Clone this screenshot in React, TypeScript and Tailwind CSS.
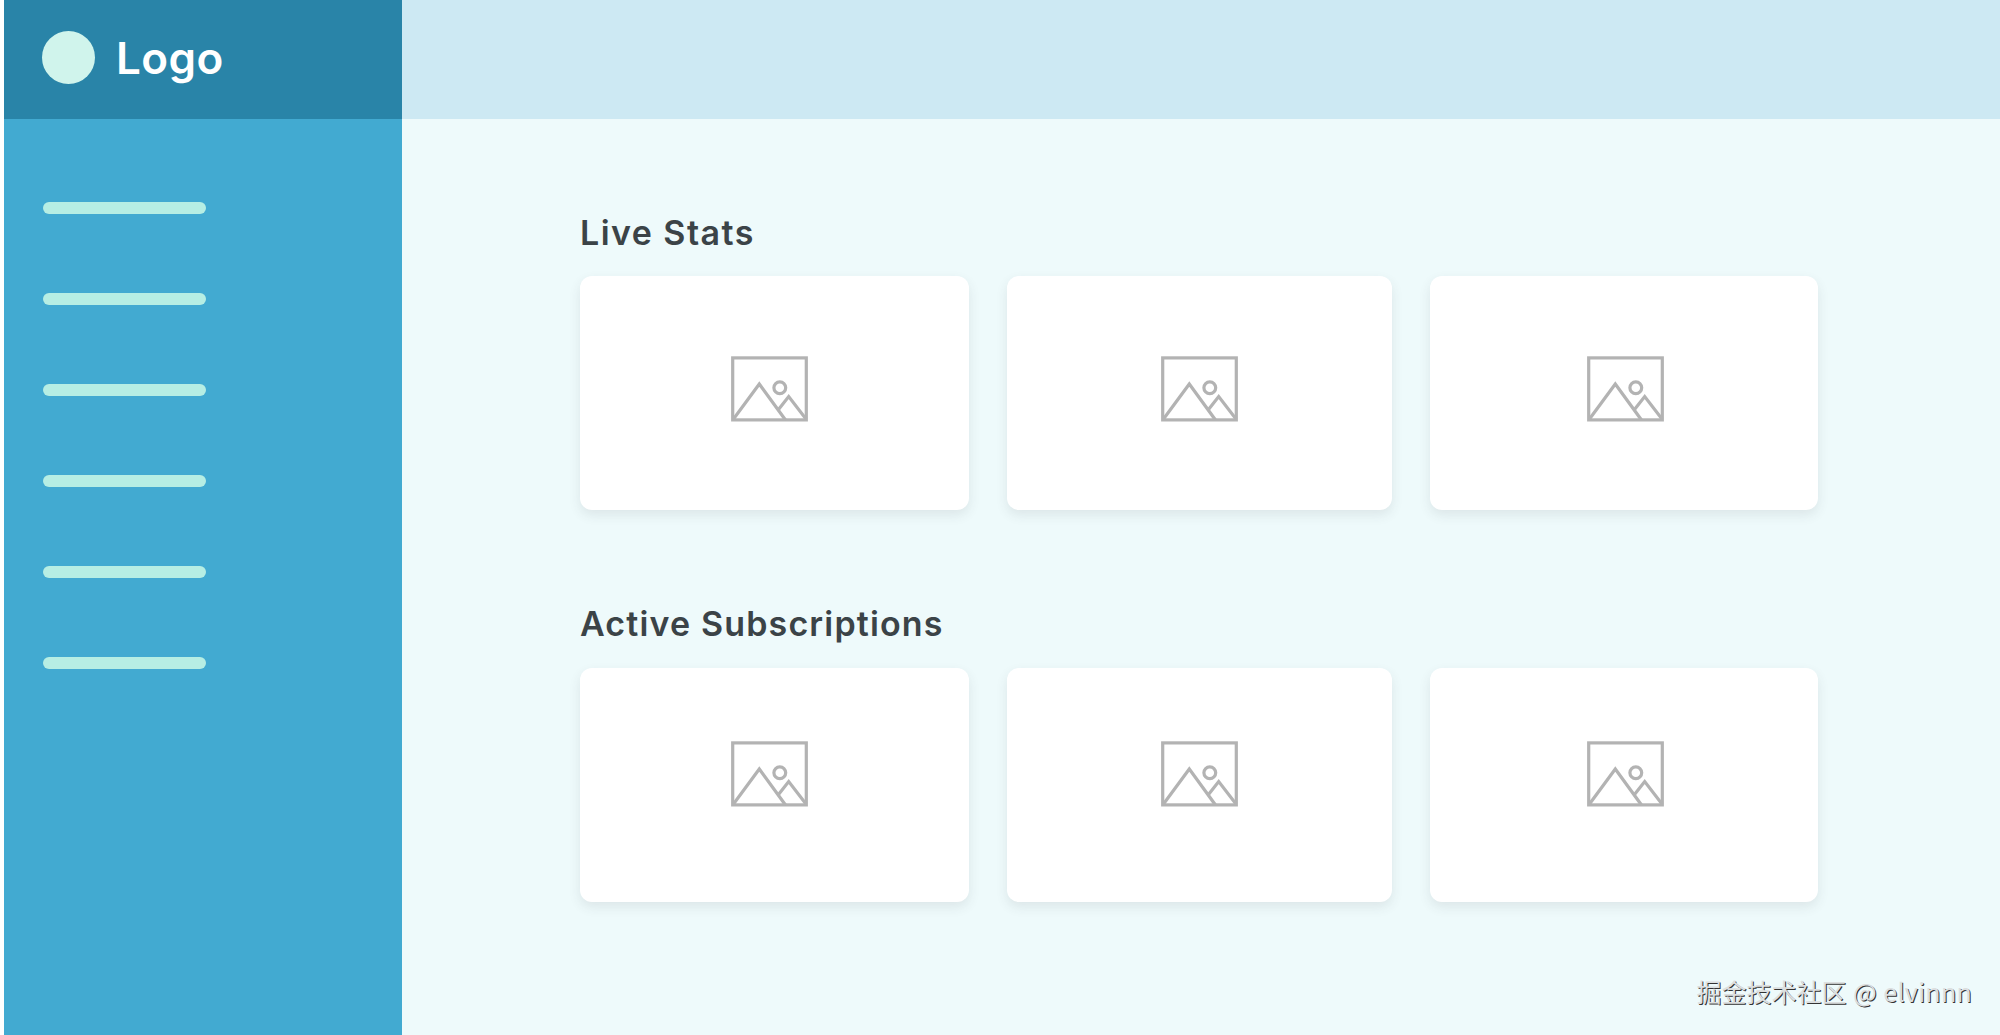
interface CardData {
  id: string
  cardClass: string
  iconClass: string
}

interface SectionData {
  title: string
  titleClass: string
  sectionClass: string
  gridClass: string
  iconTop: string
}

const NAV_ITEMS = [1, 2, 3, 4, 5, 6]

const cards: CardData[] = [
  { id: 'first', cardClass: 'w-[389px]', iconClass: 'pl-[150.5px]' },
  { id: 'second', cardClass: 'w-[385px] ml-[37.5px]', iconClass: 'pl-[154px]' },
  { id: 'third', cardClass: 'w-[388px] ml-[38.5px]', iconClass: 'pl-[157px]' }
]

const sections: SectionData[] = [
  {
    title: 'Live Stats',
    titleClass: 'tracking-[1.45px]',
    sectionClass: 'pt-[93px]',
    gridClass: 'mt-[23.5px]',
    iconTop: 'pt-[80px]'
  },
  {
    title: 'Active Subscriptions',
    titleClass: 'tracking-[1.15px]',
    sectionClass: 'pt-[93px]',
    gridClass: 'mt-[24px]',
    iconTop: 'pt-[73px]'
  }
]

function ImageIcon() {
  return (
    <svg
      width="77"
      height="66"
      viewBox="0 0 77 66"
      fill="none"
      stroke="#b3b3b3"
      strokeWidth="3.2"
    >
      <rect x="1.7" y="1.9" width="73.6" height="62" />
      <path d="M2.5 63 L28.3 28 L54.5 64" />
      <path d="M47.5 53.5 L57.7 40.5 L75 63" />
      <circle cx="48.8" cy="31.8" r="5.9" />
    </svg>
  )
}

function Sidebar() {
  return (
    <aside className="w-[398px] shrink-0 bg-[#42aad1]">
      <div className="flex items-center h-[118.5px] pl-[38px] pb-[3px] bg-[#2984a8]">
        <div className="size-[53px] rounded-full bg-[#d0f4ec]" />
        <span className="ml-[21px] text-[44px] leading-none font-semibold tracking-[0.4px] text-white">
          Logo
        </span>
      </div>
      <nav className="flex flex-col gap-[79px] pt-[83px] pl-[39px]">
        {NAV_ITEMS.map((item) => (
          <div key={item} className="w-[163px] h-3 rounded-full bg-[#b6eee4]" />
        ))}
      </nav>
    </aside>
  )
}

export default function App() {
  return (
    <div className="relative flex w-full h-[1035px] pl-1 overflow-hidden bg-white font-['Inter',sans-serif]">
      <Sidebar />

      <div className="flex-1 bg-[#eefafb]">
        <header className="h-[118.5px] bg-[#cde9f3]" />
        <main className="pl-[178px]">
          {sections.map((section) => (
            <section key={section.title} className={section.sectionClass}>
              <h2
                className={`h-[41px] text-[34px] leading-[41px] font-semibold text-[#3b4347] ${section.titleClass}`}
              >
                {section.title}
              </h2>
              <div className={`flex ${section.gridClass}`}>
                {cards.map((card) => (
                  <div
                    key={card.id}
                    className={`h-[234px] rounded-xl bg-white shadow-[0_5px_12px_rgba(60,60,70,0.1)] ${card.cardClass} ${card.iconClass} ${section.iconTop}`}
                  >
                    <ImageIcon />
                  </div>
                ))}
              </div>
            </section>
          ))}
        </main>
      </div>

      {/* Watermark */}
      <p className="absolute right-[28px] bottom-[26px] text-[25px] leading-[36px] [word-spacing:1px] whitespace-nowrap text-[#dcdfe0] font-['Noto_Sans_CJK_SC',sans-serif] [text-shadow:1px_1px_0_#333]">
        掘金技术社区 @ <span className="tracking-[0.3px]">elvinnn</span>
      </p>
    </div>
  )
}
